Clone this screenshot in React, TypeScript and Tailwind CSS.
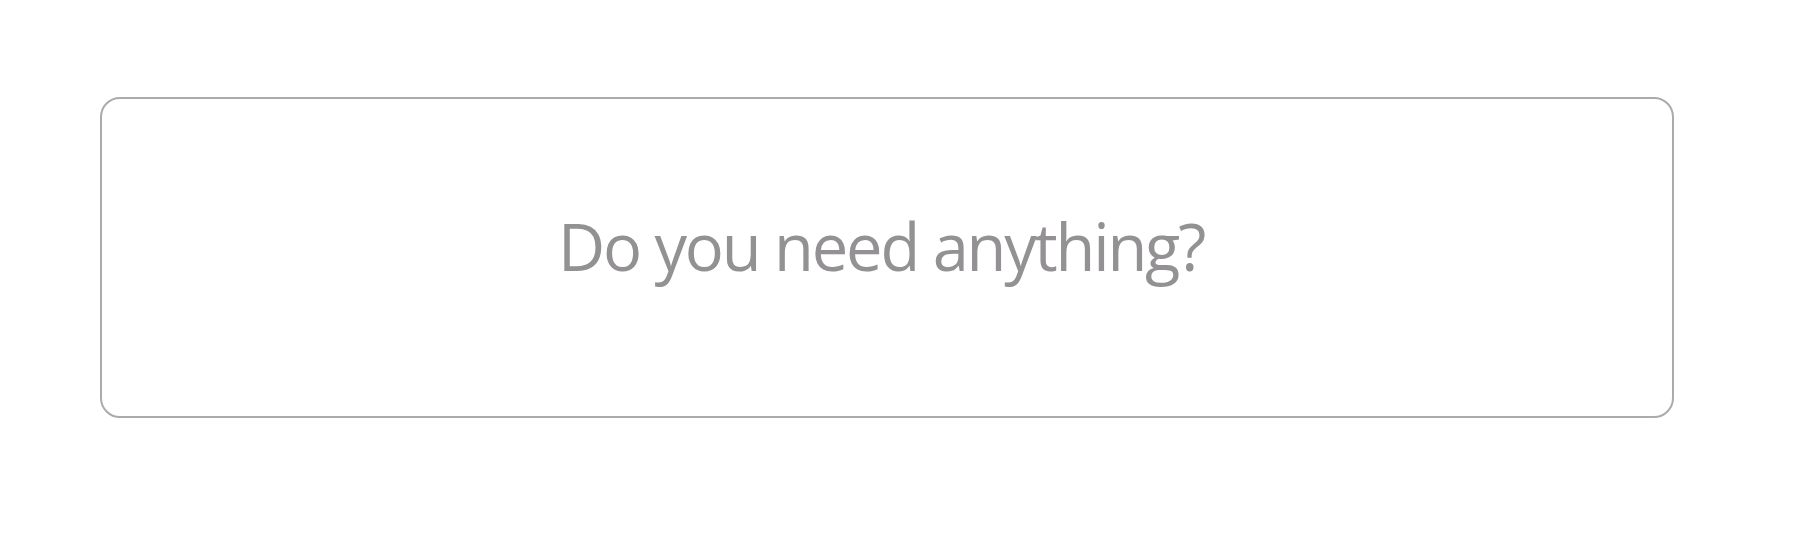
import React from "react";

const App: React.FC = () => {
  return (
    <div className="w-full h-[560px] bg-white pt-[97px] pl-[100px] pr-[119px]">
      <div className="h-[321px] rounded-[20px] border-2 border-[#ababab] flex items-center justify-center">
        <p
          className="text-[65px] leading-none text-[#939193] tracking-[-2.2px] -translate-x-[6px] -translate-y-[11px]"
          style={{ fontFamily: '"Open Sans", "Noto Sans", sans-serif' }}
        >
          Do you need anything?
        </p>
      </div>
    </div>
  );
};

export default App;
